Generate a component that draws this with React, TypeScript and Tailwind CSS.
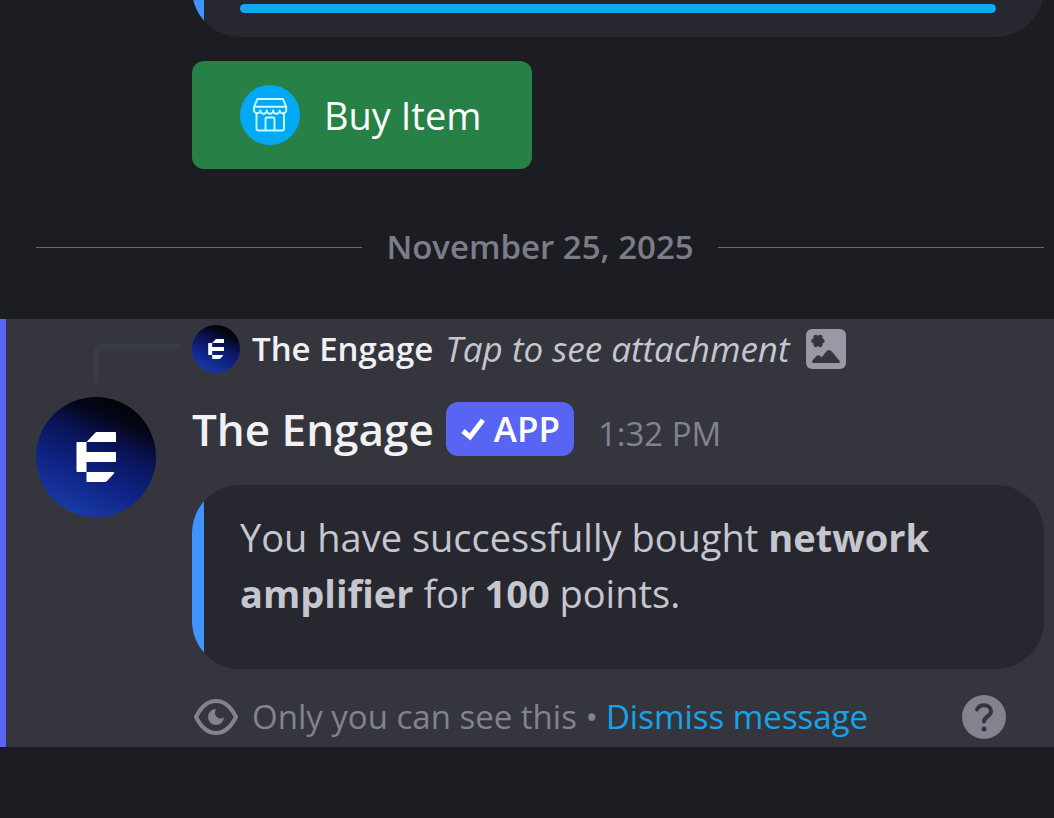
import type { ReactNode } from "react";

function Avatar({ id, className }: { id: string; className: string }) {
  return (
    <svg viewBox="0 0 120 120" className={className} role="img" aria-label="The Engage avatar">
      <defs>
        <linearGradient id={id} x1="0.7" y1="0.04" x2="0.3" y2="0.96">
          <stop offset="0" stopColor="#030406" />
          <stop offset="0.15" stopColor="#04061a" />
          <stop offset="0.38" stopColor="#0a1458" />
          <stop offset="0.65" stopColor="#0e2282" />
          <stop offset="1" stopColor="#173aa6" />
        </linearGradient>
      </defs>
      <circle cx="60" cy="60" r="60" fill={`url(#${id})`} />
      <path
        fill="#fff"
        d="M60 35h19q1 0 1 1v9H50.500V55H79q1 0 1 1v8q0 1-1 1H50.500v10H77q2 0 1 1.500L71 84q-1 1-2 1H51.500q-1 0-1-1v-9H41.500q-1 0-1-1V46q0-1 1-1h9z"
      />
    </svg>
  );
}

function StoreIcon() {
  return (
    <svg viewBox="0 0 60 60" className="size-[60px] shrink-0" aria-hidden="true">
      <circle cx="30" cy="30" r="30" fill="#04a9f5" />
      <g fill="none" stroke="#c9fbff" strokeWidth="1.900" strokeLinejoin="round" strokeLinecap="round">
        <path d="M17.500 14h25.500l3.200 7.800H14z" />
        <path d="M14 22v2.500a3.200 3.200 0 0 0 6.400 1a3.200 3.200 0 0 0 6.400 0a3.200 3.200 0 0 0 6.400 0a3.200 3.200 0 0 0 6.400 0a3.200 3.200 0 0 0 6.600-1V22" />
        <path d="M16.500 28v15.500q0 2 2 2h23.500q2 0 2-2V28" />
        <path d="M25.500 45.500V34q0-1.500 1.500-1.500h6q1.500 0 1.500 1.500v11.500" />
      </g>
    </svg>
  );
}

function ImageIcon() {
  return (
    <svg viewBox="0 0 40 40" className="size-10 shrink-0" aria-hidden="true">
      <rect width="40" height="40" rx="6" fill="#9899a5" />
      <g fill="#35353e">
        <circle cx="12" cy="12" r="4.500" />
        <circle cx="7.700" cy="12" r="2.400" />
        <circle cx="16.300" cy="12" r="2.400" />
        <circle cx="9.800" cy="8.200" r="2.400" />
        <circle cx="14.200" cy="8.200" r="2.400" />
        <circle cx="9.800" cy="15.800" r="2.400" />
        <circle cx="14.200" cy="15.800" r="2.400" />
        <path d="M7.500 34q-2.500-.3-.8-2.800l3.500-4q2-2 4.200 0l1.400 1 4.200-5.400q3-3.400 6 0l7.500 9q1.200 2-.8 2.200z" />
      </g>
    </svg>
  );
}

function EyeIcon() {
  return (
    <svg viewBox="0 0 48 48" className="size-12 shrink-0" aria-hidden="true">
      <path
        d="M4 24C7.500 17 14 8 24 8s16.500 9 20 16c-3.500 7-10 16-20 16S7.500 31 4 24z"
        fill="none"
        stroke="#82838f"
        strokeWidth="4"
        strokeLinejoin="round"
      />
      <path d="M24 16a8 8 0 1 0 8 8q-2 2.200-5 1.200q-4.200-1.700-4-5.700q.1-2 1-3.500z" fill="#82838f" />
    </svg>
  );
}

function HelpIcon() {
  return (
    <svg viewBox="0 0 44 44" className="size-11" aria-hidden="true">
      <circle cx="22" cy="22" r="22" fill="#82838f" />
      <path d="M15 14.500c1.400-3 4-4.300 7-4.300 4.200 0 7 2.600 7 6.300 0 5-7 5-7 10" fill="none" stroke="#35353e" strokeWidth="4" strokeLinecap="round" />
      <circle cx="22" cy="34" r="2.500" fill="#35353e" />
    </svg>
  );
}

function Embed({ children, className }: { children: ReactNode; className: string }) {
  return (
    <div className="flex shrink-0 overflow-hidden rounded-[48px] bg-[#272730]">
      <div className="w-3 shrink-0 bg-[#4193ff]" />
      <div className={className}>{children}</div>
    </div>
  );
}

export default function App() {
  return (
    <main className="flex min-h-screen flex-col bg-[#1c1d22] font-['Open_Sans','Noto_Sans',sans-serif] text-[#c6c6cf]">
      <section className="pr-[10px] pl-48">
        <div className="flex h-[37px] flex-col justify-end overflow-hidden">
          <Embed className="flex h-32 grow flex-col justify-end pr-12 pb-6 pl-9">
            <div className="h-[9px] rounded-full bg-[#10a8f0]" />
          </Embed>
        </div>
        <button
          type="button"
          className="mt-6 flex h-[108px] min-w-[340px] items-center gap-6 rounded-xl bg-[#278146] px-12 text-[38px] font-medium text-white"
        >
          <StoreIcon />
          Buy Item
        </button>
      </section>

      <div className="mt-[50px] flex h-14 items-center gap-6 pr-[10px] pl-9">
        <div className="h-px grow bg-[#686973]" />
        <time dateTime="2025-11-25" className="text-[33px] font-semibold text-[#7c7d89]">
          November 25, 2025
        </time>
        <div className="h-px grow bg-[#686973]" />
      </div>

      <article className="mt-11 border-l-[6px] border-[#5865f2] bg-[#35353e] pt-1 pr-[10px] pl-[30px]">
        <div className="flex h-[52px] items-center">
          <div className="flex w-[156px] shrink-0 self-end pl-[57px]">
            <div className="-mb-2 h-10 w-[87px] rounded-tl-xl border-t-[6px] border-l-[6px] border-[#3a3c45]" />
          </div>
          <Avatar id="reply-avatar" className="size-12 shrink-0" />
          <span className="ml-3 text-[33px] font-semibold whitespace-nowrap text-[#f0f0f3]">The Engage</span>
          <button type="button" className="ml-3 flex items-center gap-4 text-[35px] whitespace-nowrap italic">
            Tap to see attachment
            <ImageIcon />
          </button>
        </div>

        <div className="flex gap-9 pt-[18px]">
          <Avatar id="author-avatar" className="mt-1 size-[120px] shrink-0" />
          <div className="min-w-0 grow">
            <header className="flex h-[69px] items-baseline pt-[3px] whitespace-nowrap">
              <h2 className="text-[44px] leading-[66px] font-semibold text-[#f2f2f4]">The Engage</h2>
              <span className="ml-3 flex h-[54px] items-center gap-2 self-center rounded-xl bg-[#5865f2] px-[14px] text-[35px] font-semibold text-white">
                <svg viewBox="0 0 26 24" className="h-6 w-[26px]" aria-hidden="true">
                  <path d="M3 14l7 6L23 3" fill="none" stroke="#fff" strokeWidth="5" />
                </svg>
                APP
              </span>
              <time className="ml-6 text-[33px] leading-[48px] text-[#82838f]">1:32 PM</time>
            </header>
            <div className="mt-[23px]">
              <Embed className="pt-6 pr-12 pb-12 pl-9">
                <p className="text-[38px] leading-[56px]">
                  You have successfully bought <strong className="font-bold">network amplifier</strong> for{" "}
                  <strong className="font-bold">100</strong> points.
                </p>
              </Embed>
            </div>
            <footer className="flex h-[78px] items-center pt-[18px] pr-[38px] text-[33px] whitespace-nowrap text-[#82838f]">
              <EyeIcon />
              <span className="ml-3">Only you can see this •</span>
              <a href="#dismiss" className="ml-2 text-[#18a3e8]">
                Dismiss message
              </a>
              <button type="button" aria-label="Help" className="ml-auto">
                <HelpIcon />
              </button>
            </footer>
          </div>
        </div>
      </article>
    </main>
  );
}
